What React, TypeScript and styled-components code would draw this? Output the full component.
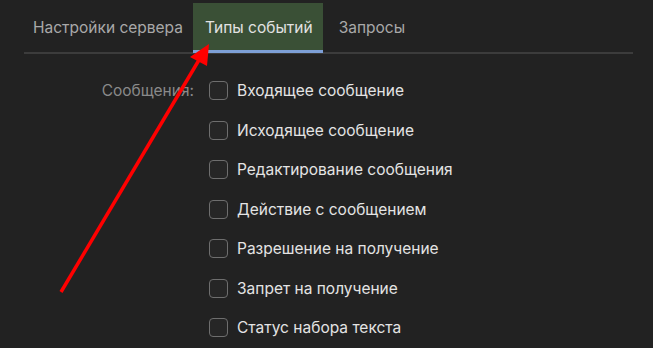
import React, { FC, useState } from 'react';
import styled, { createGlobalStyle } from 'styled-components';

const GlobalStyle = createGlobalStyle`
  html, body {
    margin: 0;
    padding: 0;
    background: #222222;
  }
  * {
    box-sizing: border-box;
  }
`;

type EventType = {
  id: string;
  text: string;
};

const tabs = ['Настройки сервера', 'Типы событий', 'Запросы'];

const messageEvents: EventType[] = [
  { id: 'incoming', text: 'Входящее сообщение' },
  { id: 'outgoing', text: 'Исходящее сообщение' },
  { id: 'edit', text: 'Редактирование сообщения' },
  { id: 'action', text: 'Действие с сообщением' },
  { id: 'allow', text: 'Разрешение на получение' },
  { id: 'deny', text: 'Запрет на получение' },
  { id: 'typing', text: 'Статус набора текста' },
];

// red annotation arrow drawn over the page
const Arrow: FC = () => (
  <ArrowLayer width="653" height="348" viewBox="0 0 653 348">
    <line x1="61" y1="292" x2="199" y2="60" stroke="#ff0000" strokeWidth="3.5" />
    <polygon points="209,44 190,57 207,66" fill="#ff0000" />
  </ArrowLayer>
);

export const App: FC = () => {
  const [active, setActive] = useState(1);
  const [checked, setChecked] = useState<Record<string, boolean>>({});

  return (
    <Page>
      <GlobalStyle />
      <TabBar>
        {tabs.map((t, i) => (
          <Tab key={t} $active={i === active} onClick={() => setActive(i)}>
            {t}
          </Tab>
        ))}
      </TabBar>
      <Form>
        <FieldLabel>Сообщения:</FieldLabel>
        <Options>
          {messageEvents.map(({ id, text }) => (
            <Option key={id}>
              <Box
                type="checkbox"
                checked={!!checked[id]}
                onChange={() => setChecked({ ...checked, [id]: !checked[id] })}
              />
              <OptionText>{text}</OptionText>
            </Option>
          ))}
        </Options>
      </Form>
      <Arrow />
    </Page>
  );
};

const Page = styled.div`
  position: relative;
  width: 653px;
  height: 348px;
  overflow: hidden;
  background: #222222;
  font-family: Inter, 'Liberation Sans', Arial, sans-serif;
  -webkit-font-smoothing: antialiased;
`;

const TabBar = styled.div`
  display: flex;
  margin: 0 20px 0 24px;
  padding-top: 3px;
  border-bottom: 2px solid #3c3c3c;
`;

const Tab = styled.div<{ $active: boolean }>`
  height: 50px;
  display: flex;
  align-items: center;
  padding: 1px 10px 0 12px;
  margin-bottom: -1px;
  font-size: 15.5px;
  cursor: pointer;
  color: ${(p) => (p.$active ? '#e2e2e2' : '#a9a9a9')};
  background: ${(p) => (p.$active ? '#3a5036' : 'transparent')};
  border-bottom: 3px solid ${(p) => (p.$active ? '#7d9fd6' : 'transparent')};

  &:first-child {
    margin-left: -3px;
  }
  &:last-child {
    padding-left: 16px;
  }
`;

const Form = styled.div`
  display: grid;
  grid-template-columns: 170px 1fr;
  column-gap: 15px;
  margin-left: 24px;
  padding-top: 17px;
`;

const FieldLabel = styled.div`
  height: 39.5px;
  display: flex;
  align-items: center;
  justify-content: flex-end;
  font-size: 15.5px;
  color: #8a8a8a;
`;

const Options = styled.div`
  display: flex;
  flex-direction: column;
`;

const Option = styled.label`
  height: 39.5px;
  display: flex;
  align-items: center;
  column-gap: 9px;
  cursor: pointer;
`;

const Box = styled.input`
  appearance: none;
  margin: 0;
  width: 19px;
  height: 19px;
  border: 1.5px solid #6e6e6e;
  border-radius: 4px;
  background: #262626;
  cursor: pointer;

  &:checked {
    background: #7d9fd6;
    border-color: #7d9fd6;
  }
`;

const OptionText = styled.span`
  font-size: 15.5px;
  color: #e4e4e4;
`;

const ArrowLayer = styled.svg`
  position: absolute;
  left: 0;
  top: 0;
  pointer-events: none;
`;

export default App;
